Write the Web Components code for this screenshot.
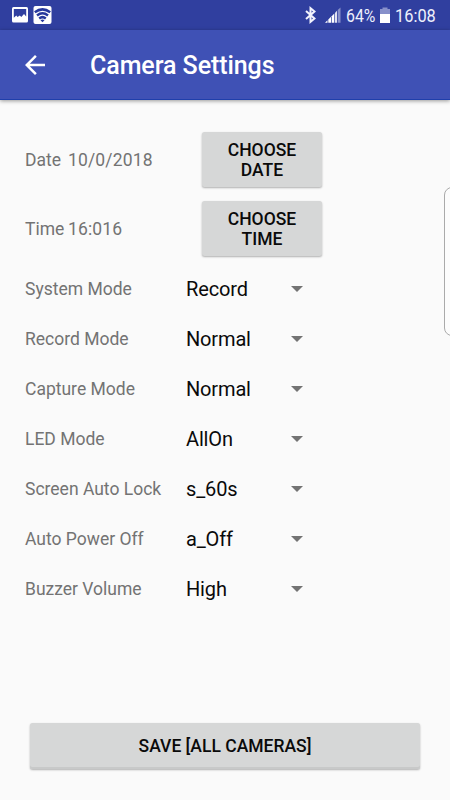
<!DOCTYPE html>
<html lang="en">
<head>
<meta charset="utf-8">
<title>Camera Settings</title>
<style>
    body {
        margin: 0;
        background: #fafafa;
        font-family: Roboto, sans-serif;
    }
</style>
</head>
<body>
<camera-screen></camera-screen>

<script>
class StatusBar extends HTMLElement {
    constructor() {
        super();
        this.$shadow = this.attachShadow({ mode: 'open' });
    }

    connectedCallback() {
        this.$shadow.innerHTML = `
            <style>
                :host {
                    display: flex;
                    align-items: center;
                    height: 30px;
                    box-sizing: border-box;
                    padding: 0 14px 0 12px;
                    background: #303f9f;
                    color: #eef0fc;
                    font-size: 18px;
                    line-height: 30px;
                }
                svg { display: block; flex: none; }
                .image { margin-right: 5px; }
                .bluetooth { margin-left: auto; margin-right: 9px; }
                .signal { margin-right: 5px; }
                .text {
                    white-space: nowrap;
                    transform-origin: 0 50%;
                    padding-top: 1px;
                }
                .level { width: 34px; transform: scaleX(.88); }
                .clock { width: 41px; transform: scaleX(.91); }
                .battery { margin-right: 5px; }
            </style>
            <svg class="image" width="16" height="30" viewBox="0 0 16 30">
                <rect y="7" width="16" height="15.500" rx="1.500" fill="#fff"/>
                <path d="M1.800 9h12.400v7.500l-2.200-2.500-2.700 3-1.500-1.500-2.300 1.500-1.200-1.500-2.500 2.300z" fill="#303f9f"/>
            </svg>
            <svg width="19" height="30" viewBox="0 0 19 30">
                <rect x=".5" y="6" width="18" height="18" rx="2" fill="#fff"/>
                <g fill="none" stroke="#26379c" stroke-width="2.500">
                    <path d="M1.800 12.200Q9.500 6.500 17.200 12.200"/>
                    <path d="M4 15.400q5.500-4.300 11 0"/>
                    <path d="M6.200 18.400q3.300-2.500 6.600 0"/>
                </g>
                <path d="M7.500 20.200q2-1.200 4 0L9.500 22.300z" fill="#26379c"/>
            </svg>
            <svg class="bluetooth" width="11" height="30" viewBox="0 0 11 30">
                <path d="M1 11l8.500 7.500-4 3.300V8.200l4 3.300L1 19" fill="none" stroke="#f2f3fd" stroke-width="2"/>
            </svg>
            <svg class="signal" width="16" height="30" viewBox="0 0 16 30">
                <g fill="#fff">
                    <path d="M0 22.800l2.500-2.500v2.500z"/>
                    <path d="M3.300 22.800v-3.300l2.700-2.700v6z"/>
                    <path d="M6.700 22.800v-6.500l2.600-2.700v9.200z"/>
                    <path d="M10 22.800v-10l2-2v12z" opacity=".85"/>
                </g>
                <path d="M12.700 22.800V10l2.800-2.500v15.300z" fill="#8790ca"/>
            </svg>
            <span class="text level">64%</span>
            <svg class="battery" width="10" height="30" viewBox="0 0 10 30">
                <path d="M0 9h2.500V7.500h5V9H10v5H0z" fill="#8790ca"/>
                <path d="M0 14h10v9H0z" fill="#fff"/>
            </svg>
            <span class="text clock">16:08</span>
        `;
    }
}

class AppBar extends HTMLElement {
    constructor() {
        super();
        this.$shadow = this.attachShadow({ mode: 'open' });
    }

    connectedCallback() {
        this.$shadow.innerHTML = `
            <style>
                :host {
                    display: flex;
                    align-items: center;
                    height: 70px;
                    box-sizing: border-box;
                    padding: 1px 20px 0;
                    background: #3f51b5;
                    border-bottom: 1px solid #1f3fab;
                    box-shadow: 0 1px 4px rgba(0, 0, 0, .4);
                    color: #fff;
                }
                svg { display: block; margin-right: 40px; }
                h1 {
                    margin: 0;
                    padding-top: 2px;
                    font-size: 25px;
                    font-weight: 500;
                    line-height: 30px;
                    letter-spacing: -.07px;
                }
            </style>
            <svg width="30" height="30" viewBox="0 0 24 24">
                <path d="M20 11H7.830l5.590-5.590L12 4l-8 8 8 8 1.410-1.410L7.830 13H20v-2z" fill="#fff"/>
            </svg>
            <h1><slot></slot></h1>
        `;
    }
}

class RaisedButton extends HTMLElement {
    constructor() {
        super();
        this.$shadow = this.attachShadow({ mode: 'open' });
    }

    connectedCallback() {
        this.$shadow.innerHTML = `
            <style>
                :host { display: block; }
                button {
                    display: block;
                    width: 100%;
                    height: 100%;
                    border: 0;
                    border-radius: 2.500px;
                    padding: 1px 10px 0;
                    background: #d6d7d7;
                    box-shadow: 0 1px 2px rgba(0, 0, 0, .3);
                    color: #0a0a0a;
                    font: 500 17.500px/20.500px Roboto, sans-serif;
                }
                :host([wide]) button {
                    box-shadow: inset 0 -2px #c8c9c9, 0 1px 2px rgba(0, 0, 0, .3);
                }
            </style>
            <button type="button"><slot></slot></button>
        `;
    }
}

class PickerRow extends HTMLElement {
    constructor() {
        super();
        this.$shadow = this.attachShadow({ mode: 'open' });
    }

    connectedCallback() {
        this.$shadow.innerHTML = `
            <style>
                :host {
                    display: grid;
                    grid-template-columns: 43px 134px 120px;
                    align-items: center;
                    height: 55px;
                    color: #737373;
                    font-size: 17.500px;
                }
                span { padding-top: 1px; }
                .value { letter-spacing: .15px; }
                raised-button { height: 55px; }
            </style>
            <span>${this.getAttribute('label')}</span>
            <span class="value">${this.getAttribute('value')}</span>
            <raised-button><slot></slot></raised-button>
        `;
    }
}

class SpinnerRow extends HTMLElement {
    constructor() {
        super();
        this.$shadow = this.attachShadow({ mode: 'open' });
    }

    connectedCallback() {
        this.$shadow.innerHTML = `
            <style>
                :host {
                    display: grid;
                    grid-template-columns: 161px 105px 12px;
                    align-items: center;
                    height: 50px;
                    color: #737373;
                    font-size: 17.500px;
                    white-space: nowrap;
                }
                .value {
                    color: #0a0a0a;
                    font-size: 20px;
                    letter-spacing: -.15px;
                }
                svg { display: block; }
            </style>
            <span>${this.getAttribute('label')}</span>
            <span class="value">${this.getAttribute('value')}</span>
            <svg width="12" height="6" viewBox="0 0 12 6">
                <path d="M0 0h12L6 6z" fill="#737373"/>
            </svg>
        `;
    }
}

class CameraScreen extends HTMLElement {
    constructor() {
        super();
        this.$shadow = this.attachShadow({ mode: 'open' });
    }

    connectedCallback() {
        this.$shadow.innerHTML = `
            <style>
                :host {
                    display: flex;
                    flex-direction: column;
                    position: relative;
                    width: 450px;
                    height: 800px;
                    overflow: hidden;
                    background: #fafafa;
                }
                app-bar { flex: none; }
                main {
                    flex: 1;
                    display: flex;
                    flex-direction: column;
                    padding: 32px 30px 31px 25px;
                }
                .pickers {
                    display: grid;
                    gap: 14px;
                    margin-bottom: 8px;
                }
                raised-button[wide] {
                    height: 46px;
                    margin-top: auto;
                    margin-left: 5px;
                }
                /* edge panel handle, lies over the page */
                .handle {
                    position: absolute;
                    top: 187px;
                    right: -11px;
                    width: 15px;
                    height: 147px;
                    border: 1px solid #aaa;
                    border-radius: 8px;
                    background: #fcfcfc;
                }
            </style>
            <status-bar></status-bar>
            <app-bar>Camera Settings</app-bar>
            <main>
                <div class="pickers">
                    <picker-row label="Date" value="10/0/2018">CHOOSE<br>DATE</picker-row>
                    <picker-row label="Time" value="16:016">CHOOSE<br>TIME</picker-row>
                </div>
                <spinner-row label="System Mode" value="Record"></spinner-row>
                <spinner-row label="Record Mode" value="Normal"></spinner-row>
                <spinner-row label="Capture Mode" value="Normal"></spinner-row>
                <spinner-row label="LED Mode" value="AllOn"></spinner-row>
                <spinner-row label="Screen Auto Lock" value="s_60s"></spinner-row>
                <spinner-row label="Auto Power Off" value="a_Off"></spinner-row>
                <spinner-row label="Buzzer Volume" value="High"></spinner-row>
                <raised-button wide>SAVE [ALL CAMERAS]</raised-button>
            </main>
            <div class="handle"></div>
        `;
    }
}

window.customElements.define('status-bar', StatusBar);
window.customElements.define('app-bar', AppBar);
window.customElements.define('raised-button', RaisedButton);
window.customElements.define('picker-row', PickerRow);
window.customElements.define('spinner-row', SpinnerRow);
window.customElements.define('camera-screen', CameraScreen);
</script>
</body>
</html>
